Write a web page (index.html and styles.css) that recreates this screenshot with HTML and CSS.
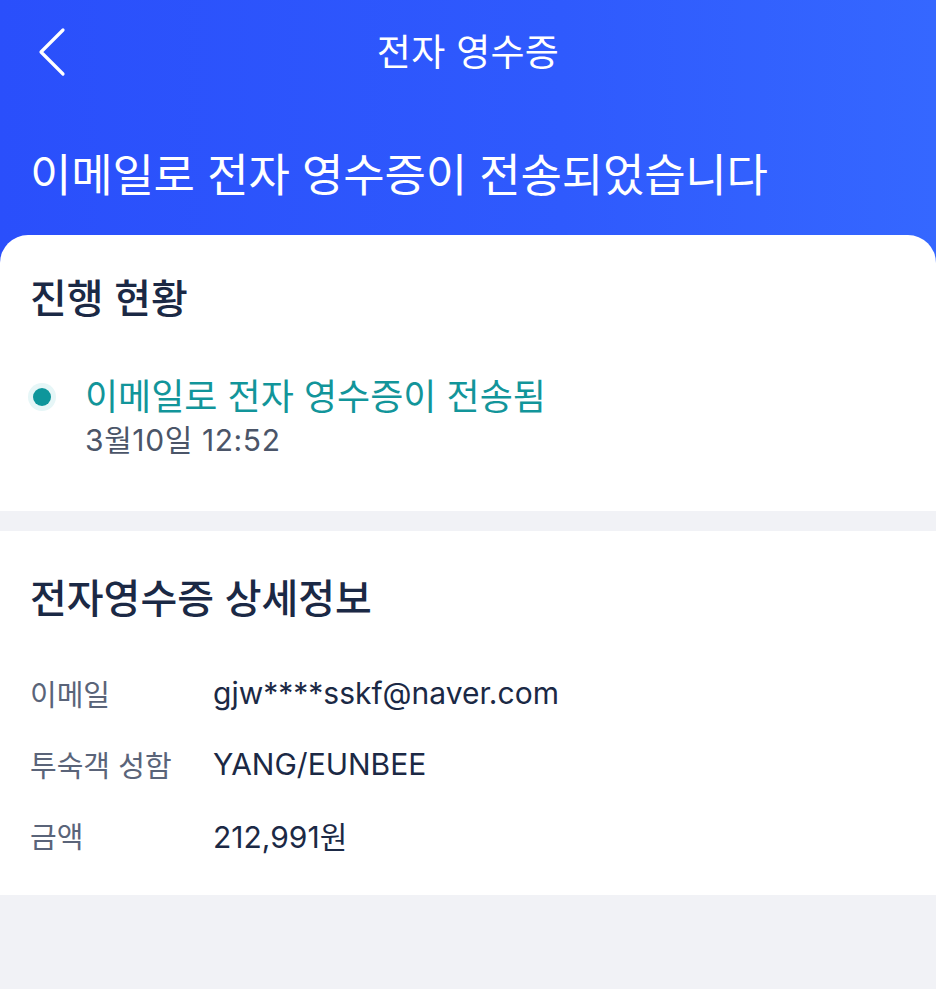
FILE: index.html
```html
<!DOCTYPE html>
<html lang="ko">
<head>
<meta charset="utf-8">
<link rel="stylesheet" href="styles.css">
</head>
<body>
<div class="top">
  <header class="nav">
    <svg class="back" width="30" height="50" viewBox="0 0 30 50"><path d="M25 3 L3 25 L25 47" fill="none" stroke="#fff" stroke-width="3.2" stroke-linecap="round" stroke-linejoin="round"/></svg>
    <h1 class="nav-title">전자 영수증</h1>
  </header>
  <h2 class="hero">이메일로 전자 영수증이 전송되었습니다</h2>
  <section class="card card-status">
    <h3 class="sec-title">진행 현황</h3>
    <div class="step">
      <span class="dot"></span>
      <div class="step-body">
        <div class="step-text">이메일로 전자 영수증이 전송됨</div>
        <div class="step-time">3월10일 12:52</div>
      </div>
    </div>
  </section>
</div>
<section class="card card-detail">
  <h3 class="sec-title">전자영수증 상세정보</h3>
  <dl class="rows">
    <div class="row"><dt>이메일</dt><dd>gjw****sskf@naver.com</dd></div>
    <div class="row"><dt>투숙객 성함</dt><dd>YANG/EUNBEE</dd></div>
    <div class="row"><dt>금액</dt><dd>212,991원</dd></div>
  </dl>
</section>
</body>
</html>
```
FILE: styles.css
```css
html, body { margin: 0; padding: 0; }
body {
  background: #f1f2f6;
  font-family: Inter, "Noto Sans CJK KR", "Noto Sans", sans-serif;
  color: #1b2945;
  width: 936px;
  min-height: 989px;
}
.top {
  background: linear-gradient(90deg, #2a4ffb 0%, #2f5afd 60%, #3567ff 100%);
}
.nav {
  height: 104px;
  display: flex;
  align-items: center;
  justify-content: center;
  position: relative;
}
.back {
  position: absolute;
  left: 38px;
  top: 27px;
}
.nav-title {
  margin: 0;
  color: #fff;
  font-size: 37px;
  font-weight: 400;
  letter-spacing: 0.3px;
  line-height: 1;
  margin-top: 0;
}
.hero {
  margin: 0;
  color: #fff;
  font-size: 45px;
  font-weight: 400;
  letter-spacing: -0.2px;
  line-height: 1;
  height: 131px;
  box-sizing: border-box;
  padding: 49px 30px 0;
}
.card {
  background: #fff;
}
.card-status {
  border-radius: 28px 28px 0 0;
  height: 276px;
  box-sizing: border-box;
  padding: 44px 30px 0;
}
.sec-title {
  margin: 0;
  font-size: 40px;
  font-weight: 500;
  letter-spacing: 0;
  line-height: 1;
  color: #1b2945;
}
.step {
  display: flex;
  align-items: flex-start;
  margin-top: 56px;
}
.dot {
  width: 18px;
  height: 18px;
  border-radius: 50%;
  background: #0e969b;
  box-shadow: 0 0 0 5px #e6f6f7;
  margin: 13px 0 0 3px;
  flex: none;
}
.step-body { margin-left: 34px; }
.step-text {
  color: #12959a;
  font-size: 36px;
  letter-spacing: 0;
  line-height: 44px;
}
.step-time {
  color: #4b5568;
  font-size: 30px;
  letter-spacing: 0.6px;
  line-height: 40px;
  margin-top: 1px;
}
.card-detail {
  margin-top: 20px;
  height: 364px;
  box-sizing: border-box;
  padding: 48px 30px 0;
}
.rows { margin: 38px 0 0; }
.row {
  display: flex;
  align-items: center;
  height: 71px;
}
.row dt {
  width: 183px;
  flex: none;
  color: #5a6479;
  font-size: 29px;
  letter-spacing: 0;
}
.row dd {
  margin: 0;
  color: #1b2945;
  font-size: 30px;
  letter-spacing: 0;
}
```
